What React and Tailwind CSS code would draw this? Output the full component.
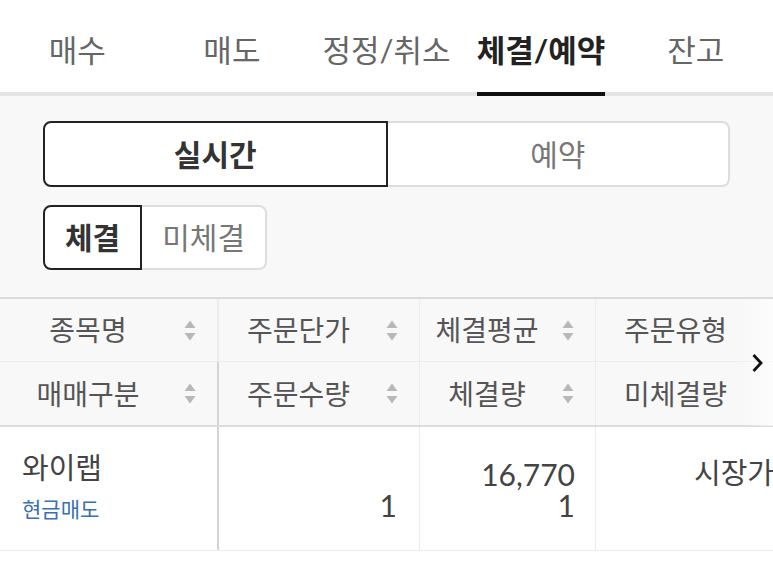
import React, { useState } from 'react';

const TABS = ['매수', '매도', '정정/취소', '체결/예약', '잔고'];

const COLS = [
  { top: '종목명', bottom: '매매구분', w: 'w-[219px]', line: 'border-r-2 border-[#d4d4d4]', sort: true },
  { top: '주문단가', bottom: '주문수량', w: 'w-[201px]', line: 'border-r border-[#ececec]', sort: true },
  { top: '체결평균', bottom: '체결량', w: 'w-[176px]', line: 'border-r border-[#ececec]', sort: true },
  // last column runs past the edge, its sort arrows sit under the scroll hint
  { top: '주문유형', bottom: '미체결량', w: 'w-[201px]', line: 'border-r border-[#ececec]', sort: false },
];

function SortIcon() {
  return (
    <svg width="12" height="21" viewBox="0 0 12 21" className="shrink-0">
      <path d="M6 0.5 L11.5 8 H0.5 Z" fill="#b8b8b8" />
      <path d="M6 20.5 L11.5 13 H0.5 Z" fill="#b8b8b8" />
    </svg>
  );
}

function HeaderCell({ label, col, last }) {
  return (
    <div className={`${col.w} ${col.line} shrink-0 h-[63px] flex items-center ${last ? '' : 'border-b border-[#ececec]'}`}>
      <span className="flex-1 text-center text-[28px] text-[#555]">{label}</span>
      <span className="w-[41px] flex justify-start pl-[8px]">{col.sort && <SortIcon />}</span>
    </div>
  );
}

export default function App() {
  const [tab, setTab] = useState(3);
  const [mode, setMode] = useState('live');
  const [filled, setFilled] = useState(true);

  return (
    <div
      className="w-[773px] h-[575px] bg-white overflow-hidden"
      style={{ fontFamily: 'Lato, "Noto Sans CJK KR", sans-serif' }}
    >
      {/* top tabs */}
      <div className="flex h-[96px] border-b-4 border-[#e4e4e4]">
        {TABS.map((t, i) => (
          <button key={t} onClick={() => setTab(i)} className="flex-1 flex justify-center">
            <span
              className={`relative h-full flex items-center pt-[8px] text-[31px] ${
                tab === i ? 'font-bold text-[#222]' : 'text-[#666]'
              }`}
            >
              {t}
              {tab === i && <span className="absolute left-0 right-0 -bottom-[4px] h-[4px] bg-[#111]" />}
            </span>
          </button>
        ))}
      </div>

      {/* order mode toggles */}
      <div className="bg-[#f8f8f8] px-[43px] pt-[25px] pb-[27px]">
        <div className="flex h-[66px]">
          <button
            onClick={() => setMode('live')}
            className={`flex-1 rounded-l-lg border-2 bg-white text-[30px] ${
              mode === 'live' ? 'border-[#222] font-bold text-[#333]' : 'border-[#ddd] border-r-0 text-[#777]'
            }`}
          >
            실시간
          </button>
          <button
            onClick={() => setMode('reserve')}
            className={`flex-1 rounded-r-lg border-2 bg-white text-[30px] ${
              mode === 'reserve' ? 'border-[#222] font-bold text-[#333]' : 'border-[#ddd] border-l-0 text-[#777]'
            }`}
          >
            예약
          </button>
        </div>
        <div className="flex h-[65px] mt-[18px]">
          <button
            onClick={() => setFilled(true)}
            className={`px-[20px] rounded-l-lg border-2 bg-white text-[30px] ${
              filled ? 'border-[#222] font-bold text-[#333]' : 'border-[#ddd] border-r-0 text-[#777]'
            }`}
          >
            체결
          </button>
          <button
            onClick={() => setFilled(false)}
            className={`px-[20px] rounded-r-lg border-2 bg-white text-[30px] ${
              !filled ? 'border-[#222] font-bold text-[#333]' : 'border-[#ddd] border-l-0 text-[#777]'
            }`}
          >
            미체결
          </button>
        </div>
      </div>

      {/* executions table */}
      <div className="relative overflow-hidden border-t-2 border-[#dcdcdc]">
        <div className="flex w-max bg-[#f8f8f8] border-b-2 border-[#dcdcdc]">
          {COLS.map((c) => (
            <div key={c.top} className="flex flex-col">
              <HeaderCell label={c.top} col={c} />
              <HeaderCell label={c.bottom} col={c} last />
            </div>
          ))}
        </div>

        <div className="flex w-max bg-white border-b border-[#ececec] h-[124px]">
          <div className="w-[219px] shrink-0 border-r-2 border-[#d4d4d4] pl-[22px] pt-[25px]">
            <div className="text-[29px] leading-[32px] text-[#444]">와이랩</div>
            <div className="text-[21px] leading-[28px] mt-[11px] text-[#3b6fb6]">현금매도</div>
          </div>
          <div className="w-[201px] shrink-0 border-r border-[#ececec] pr-[22px] pt-[32px] text-right text-[30px] leading-[31px] text-[#444]">
            <div>&nbsp;</div>
            <div>1</div>
          </div>
          <div className="w-[176px] shrink-0 border-r border-[#ececec] pr-[20px] pt-[32px] text-right text-[30px] leading-[31px] text-[#444]">
            <div>16,770</div>
            <div>1</div>
          </div>
          <div className="w-[201px] shrink-0 pr-[23px] pt-[30px] text-right text-[29px] leading-[31px] text-[#444]">
            <div>시장가</div>
          </div>
        </div>

        {/* horizontal scroll hint */}
        <div className="absolute right-0 top-0 h-[127px] w-[32px] flex items-center justify-center bg-gradient-to-r from-transparent to-white/60">
          <svg width="13" height="20" viewBox="0 0 13 20">
            <path d="M2.5 2 L10 10 L2.5 18" fill="none" stroke="#111" strokeWidth="2.8" />
          </svg>
        </div>
      </div>
    </div>
  );
}
